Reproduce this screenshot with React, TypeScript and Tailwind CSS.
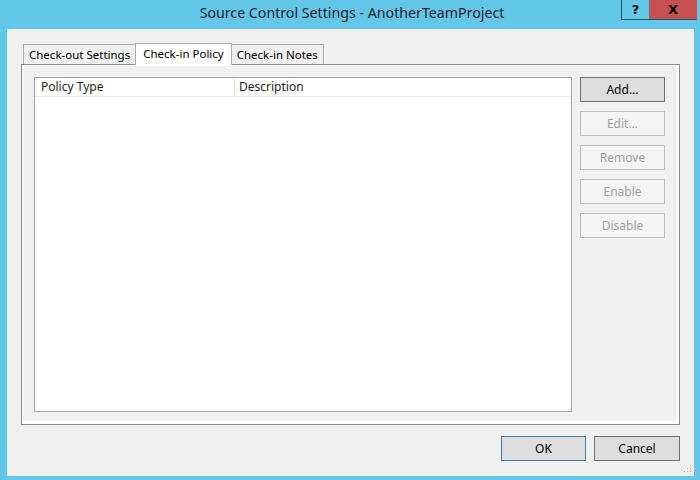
import React, { useState } from 'react';

const tabs = ['Check-out Settings', 'Check-in Policy', 'Check-in Notes'];
const actions = ['Add...', 'Edit...', 'Remove', 'Enable', 'Disable'];

const SourceControlSettings: React.FC = () => {
    const [activeTab, setActiveTab] = useState<string>('Check-in Policy');

    return (
        <div className="w-[700px] h-[480px] bg-[#63c7ea] flex flex-col font-['Noto_Sans',sans-serif] text-[12px] text-black overflow-hidden select-none">
            {/* title bar */}
            <div className="h-[29px] shrink-0 flex items-start relative">
                <div className="flex-1 h-[26px] flex items-center justify-center text-[14.2px] text-[#1e1e1e] pl-[4px]">
                    Source Control Settings - AnotherTeamProject
                </div>
                <div className="absolute right-[3px] top-0 flex">
                    <div className="w-[28px] h-[20px] border border-t-0 border-r-0 border-[#2c5466] flex items-center justify-center font-bold text-[13px] font-['DejaVu_Sans',sans-serif]">?</div>
                    <div className="w-[48px] h-[20px] bg-[#c75050] border-b border-[#2c5466] flex items-center justify-center font-bold text-[13px] font-['DejaVu_Sans',sans-serif]">X</div>
                </div>
            </div>

            {/* client area */}
            <div className="ml-[7px] mr-[6px] mb-[4px] flex-1 bg-[#f0f0f0] flex flex-col relative">
                <div className="pl-[14px] pr-[14px] pt-[14px]">
                    {/* tab strip */}
                    <div className="flex items-end h-[21px] pl-[2px] relative z-10 text-[11.5px]">
                        {tabs.map(t => {
                            const active = t === activeTab;
                            return (
                                <button
                                    key={t}
                                    onClick={() => setActiveTab(t)}
                                    className={
                                        active
                                            ? 'h-[22px] -mb-px px-[7px] bg-white border border-b-0 border-[#acacac] -mx-px relative z-10 leading-none pb-[1px]'
                                            : 'h-[20px] px-[5px] pt-[1px] bg-[#f0f0f0] border border-b-0 border-[#acacac] leading-none'
                                    }
                                >
                                    {t}
                                </button>
                            );
                        })}
                    </div>

                    {/* tab page */}
                    <div className="h-[361px] border border-[#898c95] bg-white pl-px pt-px pr-[2px] pb-[3px]">
                        <div className="h-full bg-[#f0f0f0] flex gap-[8px] pl-[11px] pt-[11px] pr-[12px] pb-[9px]">
                            <div className="flex-1 bg-white border border-[#a3a3a3] flex flex-col">
                                <div className="flex h-[19px] border-b border-[#e5e5e5] text-[#1e1e1e]">
                                    <div className="w-[200px] border-r border-[#e5e5e5] pl-[6px] flex items-center">Policy Type</div>
                                    <div className="flex-1 pl-[4px] flex items-center">Description</div>
                                </div>
                            </div>
                            <div className="w-[85px] flex flex-col gap-[9px]">
                                {actions.map((a, i) => (
                                    <button
                                        key={a}
                                        disabled={i > 0}
                                        className={
                                            i === 0
                                                ? 'h-[25px] bg-[#dddddd] border border-[#707070] text-black'
                                                : 'h-[25px] bg-[#f4f4f4] border border-[#bfbfbf] text-[#a0a0a0]'
                                        }
                                    >
                                        {a}
                                    </button>
                                ))}
                            </div>
                        </div>
                    </div>
                </div>

                {/* dialog buttons */}
                <div className="flex justify-end gap-[8px] pr-[14px] pt-[11px]">
                    <button className="w-[85px] h-[25px] bg-[#dddddd] border border-[#3c7fb1]">OK</button>
                    <button className="w-[86px] h-[25px] bg-[#dddddd] border border-[#707070]">Cancel</button>
                </div>

                {/* size grip */}
                <svg className="absolute right-[2px] bottom-[3px]" width="9" height="9" viewBox="0 0 9 9">
                    {[[7, 1], [4, 4], [7, 4], [1, 7], [4, 7], [7, 7]].map(([x, y]) => (
                        <rect key={`${x}-${y}`} x={x} y={y} width="1" height="1" fill="#b0b0b0" />
                    ))}
                </svg>
            </div>
        </div>
    );
};

export default SourceControlSettings;
